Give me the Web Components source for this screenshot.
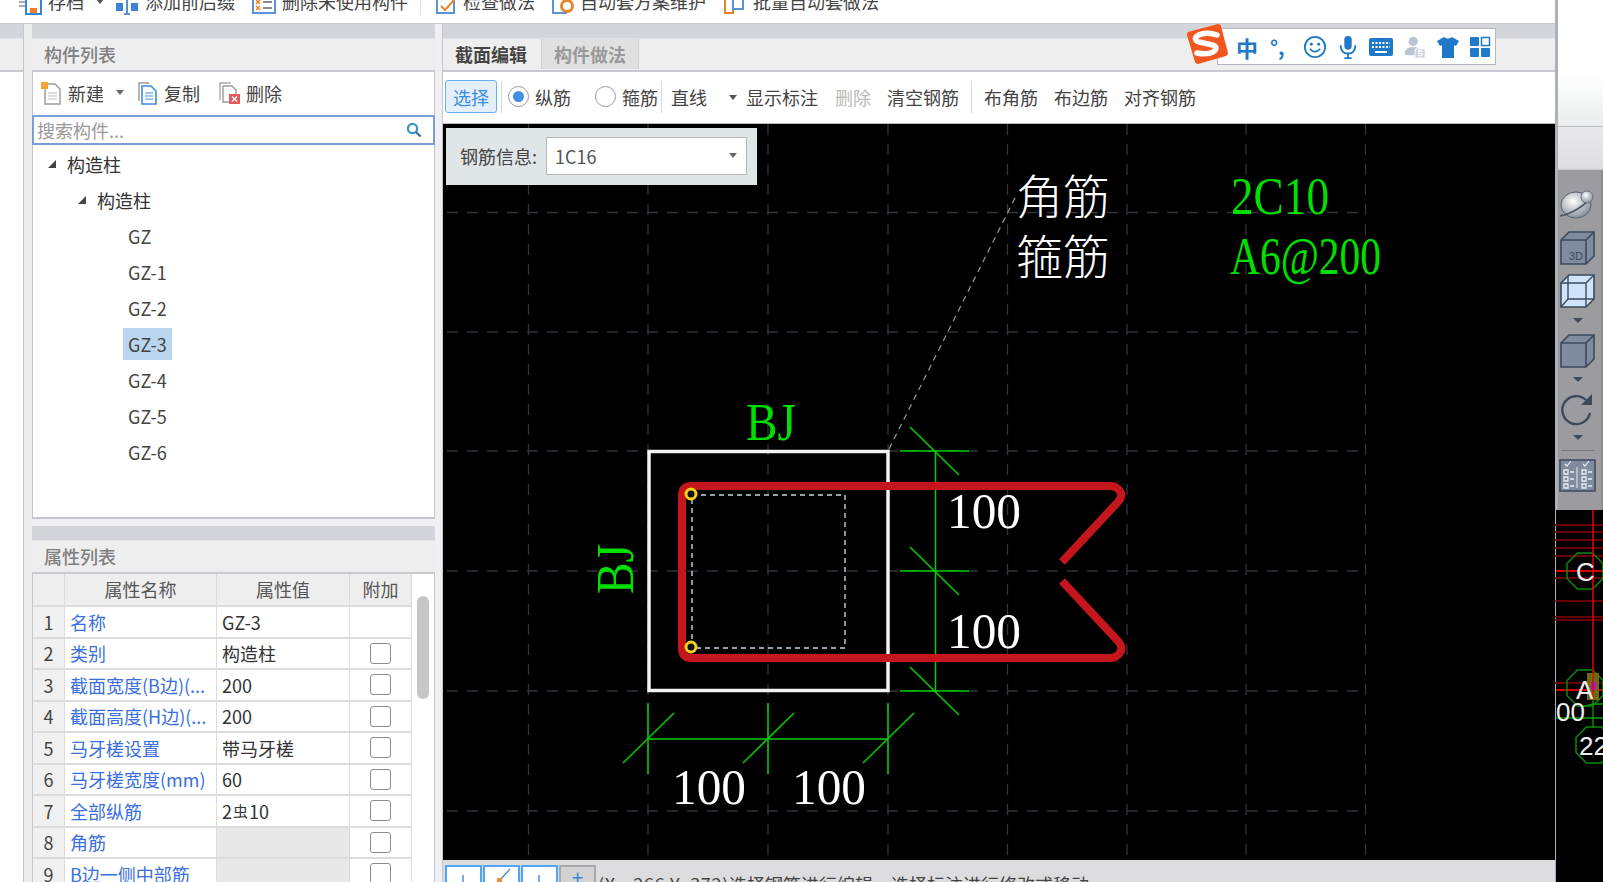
<!DOCTYPE html>
<html lang="zh">
<head>
<meta charset="utf-8">
<title>构造柱 截面编辑</title>
<style>
  html, body { margin: 0; height: 882px; overflow: hidden; background: #fff; }
  body { font: 18px "Noto Sans CJK SC", "Noto Sans", sans-serif; color: #333; }
</style>
</head>
<body>
<gcl-app></gcl-app>
<script>
const FONT = '"Noto Sans CJK SC", "Noto Sans", sans-serif';

class TopBar extends HTMLElement {
  constructor() { super(); this.attachShadow({ mode: 'open' }); }
  connectedCallback() { this.render(); }
  render() {
    this.shadowRoot.innerHTML = `
      <style>
        :host { display: block; height: 24px; background: #fff; border-bottom: 1px solid #c4c6cb; box-sizing: border-box; overflow: hidden; }
        .row { display: flex; align-items: center; height: 24px; margin-top: -11px; padding-left: 18px; white-space: nowrap; color: #444; }
        .item { display: flex; align-items: center; gap: 6px; }
        svg { width: 24px; height: 24px; flex: none; margin-top: 3px; }
        .arrow { width: 0; height: 0; border: 4px solid transparent; border-top: 5px solid #555; border-bottom: 0; margin-left: 6px; }
        .sep { width: 1px; height: 28px; background: #ddd; margin-left: 12px; }
      </style>
      <div class="row">
        <div class="item">
          <svg viewBox="0 0 24 24"><path d="M1 3h6M1 7h6M1 11h6M1 15h6" stroke="#aab" stroke-width="2" fill="none"/><rect x="8" y="8" width="15" height="15" fill="#fff" stroke="#3b83d6" stroke-width="2"/><rect x="12" y="17" width="7" height="5" fill="#ee7f2d"/></svg>
          <span>存档</span><i class="arrow"></i>
        </div>
        <div class="item" style="margin-left:11px">
          <svg viewBox="0 0 24 24"><rect x="1" y="12" width="7" height="8" fill="#3b83d6"/><rect x="16" y="12" width="7" height="8" fill="#3b83d6"/><path d="M12 8v15M9 23h6" stroke="#5b8fd0" stroke-width="2" fill="none"/></svg>
          <span>添加前后缀</span>
        </div>
        <div class="item" style="margin-left:17px">
          <svg viewBox="0 0 24 24"><rect x="1" y="4" width="22" height="18" fill="#fff" stroke="#5b93d6" stroke-width="2"/><path d="M4 9l4 4m0-4l-4 4M4 15l4 4m0-4l-4 4" stroke="#e8842c" stroke-width="1.5"/><path d="M11 11h9M11 17h9" stroke="#666" stroke-width="1.5"/></svg>
          <span>删除未使用构件</span>
        </div>
        <i class="sep"></i>
        <div class="item" style="margin-left:14px;gap:4px">
          <svg viewBox="0 0 24 24"><path d="M2 3h17v19H2z" fill="#fff" stroke="#5b93d6" stroke-width="2"/><path d="M6 15l4 4 9-10" stroke="#e8842c" stroke-width="2" fill="none"/></svg>
          <span>检查做法</span>
        </div>
        <div class="item" style="margin-left:16px;gap:5px">
          <svg viewBox="0 0 24 24"><path d="M2 3h13v19H2z" fill="#fff" stroke="#5b93d6" stroke-width="2"/><circle cx="16" cy="15" r="5.5" fill="#fff" stroke="#e8842c" stroke-width="3"/></svg>
          <span>自动套方案维护</span>
        </div>
        <div class="item" style="margin-left:17px">
          <svg viewBox="0 0 24 24"><path d="M2 3h8v19H2z" fill="#fff" stroke="#e8842c" stroke-width="2"/><path d="M10 3h10v15h-10z" fill="#fff" stroke="#5b93d6" stroke-width="2"/></svg>
          <span>批量自动套做法</span>
        </div>
      </div>`;
  }
}
customElements.define('top-bar', TopBar);

class PanelHead extends HTMLElement {
  constructor() { super(); this.attachShadow({ mode: 'open' }); }
  connectedCallback() { this.render(); }
  render() {
    this.shadowRoot.innerHTML = `
      <style>
        :host { display: block; flex: none; box-sizing: border-box; height: 48px; background: #d3d5da; padding-top: 14px; }
        .bar { box-sizing: border-box; height: 34px; background: #eee; border-bottom: 2px solid #c8cacf; border-top: 1px solid #e2e3e6; display: flex; align-items: center; padding: 0 0 1px 12px; color: #808080; font-weight: 500; }
      </style>
      <div class="bar"><slot></slot></div>`;
  }
}
customElements.define('panel-head', PanelHead);

class CompList extends HTMLElement {
  constructor() { super(); this.attachShadow({ mode: 'open' }); }
  connectedCallback() { this.render(); }
  render() {
    const kids = ['GZ', 'GZ-1', 'GZ-2', 'GZ-3', 'GZ-4', 'GZ-5', 'GZ-6']
      .map(n => `<div class="node leaf"><span class="${n === 'GZ-3' ? 'on' : ''}">${n}</span></div>`).join('');
    this.shadowRoot.innerHTML = `
      <style>
        :host { display: block; flex: none; height: 447px; box-sizing: border-box; background: #fff; border: solid #c4c6cb; border-width: 0 1px 2px; }
        .tools { height: 43px; display: flex; align-items: center; padding: 0 0 2px 7px; box-sizing: border-box; color: #444; }
        .tools div { display: flex; align-items: center; gap: 6px; height: 34px; }
        .tools svg { width: 22px; height: 24px; }
        .arrow { width: 0; height: 0; border: 4px solid transparent; border-top: 5px solid #666; border-bottom: 0; margin-left: 6px; }
        .search { box-sizing: border-box; height: 30px; margin: 0 -1px; border: 2px solid #7b9ed9; display: flex; align-items: center; justify-content: space-between; padding: 0 11px 0 3px; color: #9a9a9a; background: #fff; }
        .search svg { width: 16px; height: 16px; }
        .tree { padding-top: 1px; }
        .node { height: 36px; display: flex; align-items: center; color: #333; }
        .node i { width: 0; height: 0; border-style: solid; border-width: 0 0 8px 8px; border-color: transparent transparent #444 transparent; margin-right: 11px; }
        .l1 { padding-left: 15px; } .l2 { padding-left: 45px; } .leaf { padding-left: 95px; color: #444; }
        .leaf span { padding: 3px 5px; line-height: 26px; margin-left: -5px; }
        .leaf span.on { background: #b9d6ee; }
      </style>
      <div class="tools">
        <div>
          <svg viewBox="0 0 22 24"><path d="M5 3h10l5 5v15H5z" fill="#fff" stroke="#999" stroke-width="1.4"/><path d="M8 12h9M8 15h9M8 18h9" stroke="#bbb"/><rect x="1" y="1" width="7" height="7" fill="#f3a33a"/></svg>
          <span>新建</span><i class="arrow"></i>
        </div>
        <div style="margin-left:12px">
          <svg viewBox="0 0 22 24"><path d="M3 20V2h10" fill="none" stroke="#999" stroke-width="1.4"/><path d="M6 5h9l5 5v13H6z" fill="#fff" stroke="#3f8bdc" stroke-width="1.6"/><path d="M9 12h8M9 15h8M9 18h8" stroke="#3f8bdc"/></svg>
          <span>复制</span>
        </div>
        <div style="margin-left:18px">
          <svg viewBox="0 0 22 24"><path d="M2 19V2h11" fill="none" stroke="#aaa" stroke-width="1.4"/><path d="M5 5h9l4 4v6M5 5v16h6" fill="#fff" stroke="#999" stroke-width="1.4"/><rect x="11" y="13" width="11" height="10" fill="#e25a5a"/><path d="M14 15.5l5 5m0-5l-5 5" stroke="#fff" stroke-width="1.4"/></svg>
          <span>删除</span>
        </div>
      </div>
      <div class="search">
        <span>搜索构件...</span>
        <svg viewBox="0 0 16 16"><circle cx="6.5" cy="6.5" r="4.6" fill="none" stroke="#3a93c9" stroke-width="2.2"/><path d="M10 10l4.5 4.5" stroke="#3a6f9e" stroke-width="2.4"/></svg>
      </div>
      <div class="tree">
        <div class="node l1"><i></i>构造柱</div>
        <div class="node l2"><i></i>构造柱</div>
        ${kids}
      </div>`;
  }
}
customElements.define('comp-list', CompList);

class PropTable extends HTMLElement {
  constructor() { super(); this.attachShadow({ mode: 'open' }); }
  connectedCallback() { this.render(); }
  render() {
    const rows = [
      ['名称', 'GZ-3', 0, 0],
      ['类别', '构造柱', 1, 0],
      ['截面宽度(B边)(...', '200', 1, 0],
      ['截面高度(H边)(...', '200', 1, 0],
      ['马牙槎设置', '带马牙槎', 1, 0],
      ['马牙槎宽度(mm)', '60', 1, 0],
      ['全部纵筋', '2<sup>虫</sup>10', 1, 0],
      ['角筋', '', 1, 1],
      ['B边一侧中部筋', '', 1, 1]
    ].map((r, i) => `
      <div class="num">${i + 1}</div>
      <div class="name">${r[0]}</div>
      <div class="val ${r[3] ? 'off' : ''}">${r[1]}</div>
      <div class="add">${r[2] ? '<i></i>' : ''}</div>`).join('');
    this.shadowRoot.innerHTML = `
      <style>
        :host { display: flex; flex: none; background: #fff; border: solid #c4c6cb; border-width: 0 1px; height: 308px; overflow: hidden; }
        .grid { display: grid; grid-template-columns: 32px 152px 133px 62px; grid-template-rows: 33px; grid-auto-rows: 31.5px; width: 379px; align-content: start; flex: none; }
        .grid > div { box-sizing: border-box; border: solid #dcdcdc; border-width: 0 1px 2px 0; display: flex; align-items: center; white-space: nowrap; overflow: hidden; }
        .head { background: #eee; justify-content: center; color: #555; padding-bottom: 2px; }
        .num { background: #f0f0f0; justify-content: center; color: #444; }
        .name { color: #3a6fe0; padding-left: 5px; }
        .val { padding-left: 5px; color: #333; }
        .val.off { background: #e8e8e8; }
        .add { justify-content: center; }
        .add i { box-sizing: border-box; width: 21px; height: 21px; border: 1.5px solid #8c8c8c; border-radius: 3px; background: #fff; }
        sup { font-size: 15px; line-height: 0; vertical-align: 4px; margin: 0 1px; }
        .scroll { flex: 1; display: flex; justify-content: center; padding-top: 22px; }
        .scroll b { width: 12px; height: 103px; border-radius: 6px; background: #c6c6c6; }
      </style>
      <div class="grid">
        <div class="head"></div><div class="head">属性名称</div><div class="head">属性值</div><div class="head">附加</div>
        ${rows}
      </div>
      <div class="scroll"><b></b></div>`;
  }
}
customElements.define('prop-table', PropTable);

class EditBar extends HTMLElement {
  constructor() { super(); this.attachShadow({ mode: 'open' }); }
  connectedCallback() { this.render(); }
  render() {
    this.shadowRoot.innerHTML = `
      <style>
        :host { display: flex; flex: none; align-items: center; height: 52px; box-sizing: border-box; padding: 0 0 2px 2px; background: #fff; white-space: nowrap; color: #444; border-bottom: 1px solid #bbb; }
        .pick { box-sizing: border-box; width: 52px; height: 33px; border: 1.5px solid #69aef0; border-radius: 3px; background: #e3f0fc; color: #3d8ce0; display: flex; align-items: center; justify-content: center; }
        .sep { width: 1px; height: 32px; background: #d8d8d8; }
        .radio { box-sizing: border-box; width: 21px; height: 21px; border: 1.5px solid #999; border-radius: 50%; background: #fff; display: flex; align-items: center; justify-content: center; margin-right: 6px; }
        .radio.on::after { content: ""; width: 11px; height: 11px; border-radius: 50%; background: #3f8fe6; }
        .arrow { width: 0; height: 0; border: 4px solid transparent; border-top: 5px solid #555; border-bottom: 0; margin: 2px 0 0 8px; }
        .off { color: #bbb; }
      </style>
      <div class="pick">选择</div>
      <i class="sep" style="margin-left:4px"></i>
      <i class="radio on" style="margin-left:6px"></i><span>纵筋</span>
      <i class="radio" style="margin-left:24px"></i><span>箍筋</span>
      <i class="sep" style="margin-left:3px"></i>
      <span style="margin-left:9px">直线</span><i class="arrow" style="margin-left:22px"></i>
      <span style="margin-left:9px">显示标注</span>
      <span class="off" style="margin-left:17px">删除</span>
      <span style="margin-left:16px">清空钢筋</span>
      <i class="sep" style="margin-left:12px"></i>
      <span style="margin-left:12px">布角筋</span>
      <span style="margin-left:16px">布边筋</span>
      <span style="margin-left:16px">对齐钢筋</span>`;
  }
}
customElements.define('edit-bar', EditBar);

class SectionCanvas extends HTMLElement {
  constructor() { super(); this.attachShadow({ mode: 'open' }); }
  connectedCallback() { this.render(); }
  render() {
    const xs = [528.5, 648, 768, 888, 1007.5, 1127, 1246, 1365.5];
    const ys = [212.5, 332, 451, 571, 691, 811];
    const grid = xs.map(x => `<path d="M${x} 124V860"/>`).join('') +
      ys.map(y => `<path d="M447 ${y}H1366"/>`).join('');
    const slash = (x, y) => `<path d="M${x - 25} ${y + 24}L${x + 26} ${y - 26}"/>`;
    const back = (x, y) => `<path d="M${x - 25} ${y - 24}L${x + 24} ${y + 24}"/>`;
    this.shadowRoot.innerHTML = `
      <style>
        :host { display: block; flex: none; position: relative; height: 736px; background: #000; overflow: hidden; }
        svg { display: block; width: 1112px; height: 736px; }
        text { font-family: "Liberation Serif", "Noto Sans CJK SC", serif; }
        .info { position: absolute; left: 3px; top: 4px; width: 311px; height: 57px; box-sizing: border-box; background: #e0e6e8; display: flex; align-items: center; padding: 0 0 2px 14px; gap: 9px; color: #444; }
        .sel { box-sizing: border-box; width: 201px; height: 38px; background: #fff; border: 1.5px solid #b5b5b5; display: flex; align-items: center; justify-content: space-between; padding: 0 9px 0 8px; color: #555; }
        .sel i { width: 0; height: 0; border: 4px solid transparent; border-top: 5px solid #666; border-bottom: 0; }
      </style>
      <svg viewBox="443 124 1112 736">
        <g stroke="#30343d" stroke-width="1.3" stroke-dasharray="11 9" fill="none">${grid}</g>
        <path d="M889 449L1017 194" stroke="#999" stroke-width="1.2" stroke-dasharray="6 5" fill="none"/>
        <rect x="649" y="451.5" width="239" height="239" fill="none" stroke="#f2f2f2" stroke-width="3.5"/>
        <g stroke="#00d000" stroke-width="1.5" fill="none">
          <path d="M900 451H969M900 571H969M900 691H969M935.500 451V691"/>
          ${back(935, 451)}${back(935, 571)}${back(935, 691)}
          <path d="M648 739H888M648 703V774M768 703V774M888 703V774"/>
          ${slash(648, 739)}${slash(768, 739)}${slash(888, 739)}
        </g>
        <rect x="692" y="495" width="153" height="153" fill="none" stroke="#c6d6e6" stroke-width="1.4" stroke-dasharray="5 4"/>
        <path d="M1062 562L1117 503Q1125 495 1118 489Q1115 486 1110 486H692Q682 486 682 496V648Q682 658 692 658H1110Q1115 658 1118 655Q1125 648 1117 640L1062 581" fill="none" stroke="#c4161c" stroke-width="8"/>
        <circle cx="691" cy="494" r="5" fill="#111" stroke="#f7d21c" stroke-width="3"/>
        <circle cx="691" cy="647" r="5" fill="#111" stroke="#f7d21c" stroke-width="3"/>
        <g fill="#00e000" font-size="52">
          <text x="746" y="440" textLength="50" lengthAdjust="spacingAndGlyphs">BJ</text>
          <text transform="translate(633 594) rotate(-90)" textLength="50" lengthAdjust="spacingAndGlyphs">BJ</text>
          <text x="1231" y="214" textLength="98" lengthAdjust="spacingAndGlyphs">2C10</text>
          <text x="1230" y="274" textLength="151" lengthAdjust="spacingAndGlyphs">A6@200</text>
        </g>
        <g fill="#fff" font-size="50">
          <text x="947" y="528" textLength="74" lengthAdjust="spacingAndGlyphs">100</text>
          <text x="947" y="648" textLength="74" lengthAdjust="spacingAndGlyphs">100</text>
          <text x="672" y="804" textLength="74" lengthAdjust="spacingAndGlyphs">100</text>
          <text x="792" y="804" textLength="74" lengthAdjust="spacingAndGlyphs">100</text>
        </g>
        <g fill="#fff" font-size="47" font-weight="300">
          <text x="1016" y="214">角筋</text>
          <text x="1016" y="274">箍筋</text>
        </g>
      </svg>
      <div class="info"><span>钢筋信息:</span><div class="sel"><span>1C16</span><i></i></div></div>`;
  }
}
customElements.define('section-canvas', SectionCanvas);

class StatusRow extends HTMLElement {
  constructor() { super(); this.attachShadow({ mode: 'open' }); }
  connectedCallback() { this.render(); }
  render() {
    this.shadowRoot.innerHTML = `
      <style>
        :host { display: flex; flex: none; height: 22px; box-sizing: border-box; padding: 5px 0 0 2px; background: #dcdcde; overflow: hidden; white-space: nowrap; color: #444; }
        .b { box-sizing: border-box; width: 37px; height: 30px; background: #fff; border: 2px solid #4ea6f5; margin-right: 1px; flex: none; }
        .b svg { display: block; width: 33px; height: 26px; }
        .plus { background: #d2d2d4; border-color: #a8a8a8; color: #3a86d8; text-align: center; line-height: 20px; font-size: 20px; }
        .msg { line-height: 26px; margin: 6px 0 0 1px; }
        .msg b { font-weight: 400; letter-spacing: .7px; }
      </style>
      <div class="b"><svg viewBox="0 0 33 26"><path d="M16 8V26" stroke="#4a8fdc" stroke-width="1.500"/></svg></div>
      <div class="b"><svg viewBox="0 0 33 26"><path d="M15 13L25 2" stroke="#4a8fdc" stroke-width="1.500"/><rect x="12" y="11" width="5" height="5" fill="#ee8a3a"/></svg></div>
      <div class="b"><svg viewBox="0 0 33 26"><path d="M16 8V26" stroke="#4a8fdc" stroke-width="1.500"/></svg></div>
      <div class="b plus">+</div>
      <span class="msg"><b>(X: -266 Y: 372)</b>选择钢筋进行编辑，选择标注进行修改或移动.</span>`;
  }
}
customElements.define('status-row', StatusRow);

class ToolRail extends HTMLElement {
  constructor() { super(); this.attachShadow({ mode: 'open' }); }
  connectedCallback() { this.render(); }
  render() {
    const cube = (inner, fill) => `
      <path d="M2 10L10 2H35V26L27 34H2Z" fill="${fill}" stroke="#3e4a5c" stroke-width="1.6"/>
      <path d="M2 10H27V34M27 10L35 2" fill="none" stroke="#3e4a5c" stroke-width="1.6"/>${inner}`;
    this.shadowRoot.innerHTML = `
      <style>
        :host { display: flex; flex: none; flex-direction: column; align-items: center; height: 340px; box-sizing: border-box; padding: 18px 4px 0 0; background: #9b9ba0; border-left: 3px solid #adb1ba; border-right: 2px solid #8b8b90; }
        svg { display: block; flex: none; width: 37px; }
        .down { width: 0; height: 0; border: 5px solid transparent; border-top: 5px solid #3e4a5c; border-bottom: 0; flex: none; }
        .line { width: 34px; height: 1px; background: #77777c; margin-top: 10px; flex: none; }
      </style>
      <svg viewBox="0 0 37 31" height="31">
        <defs><radialGradient id="ball" cx=".4" cy=".35" r=".8"><stop offset="0" stop-color="#fff"/><stop offset="1" stop-color="#6f7a88"/></radialGradient></defs>
        <ellipse cx="17" cy="17" rx="15" ry="13" fill="url(#ball)" stroke="#5a6270"/>
        <path d="M1 28C12 26 26 18 33 8" fill="none" stroke="#4a5260" stroke-width="1.5"/>
        <circle cx="28" cy="9" r="6" fill="url(#ball)" stroke="#6a7280"/>
      </svg>
      <svg viewBox="0 0 37 36" height="36" style="margin-top:11px">${cube('<text x="10" y="30" font-family="Liberation Sans, sans-serif" font-size="11" fill="#3e4a5c">3D</text>', '#7f8b9e')}</svg>
      <svg viewBox="0 0 37 36" height="36" style="margin-top:7px">
        <path d="M2 10L10 2H35V26L27 34H2Z" fill="#cfe3fb" stroke="#3e4a5c" stroke-width="1.6"/>
        <path d="M2 10H27V34M27 10L35 2M9 3V26H35M9 26L2 34" fill="none" stroke="#3e4a5c" stroke-width="1.400"/>
      </svg>
      <i class="down" style="margin-top:9px"></i>
      <svg viewBox="0 0 37 36" height="36" style="margin-top:10px">${cube('', '#7f8b9e')}</svg>
      <i class="down" style="margin-top:8px"></i>
      <svg viewBox="0 0 37 35" height="35" style="margin-top:11px">
        <path d="M31 20A14 14 0 1 1 27 7" fill="none" stroke="#3e4a5c" stroke-width="2.400"/>
        <path d="M33 1V12H22Z" fill="#3e4a5c"/>
      </svg>
      <i class="down" style="margin-top:7px"></i>
      <i class="line"></i>
      <svg viewBox="0 0 37 35" height="35" style="margin-top:6px">
        <rect x="1" y="3" width="35" height="31" fill="#7f8b9e" stroke="#3e4a5c" stroke-width="1.500"/>
        <path d="M18 10V31" stroke="#e8eef6"/>
        <g stroke="#e8eef6" stroke-width="1.300" fill="none">
          <path d="M5 13h4v4H5zM5 20h4v4H5zM5 27h4v4H5zM23 13h4v4h-4zM23 20h4v4h-4zM23 27h4v4h-4zM11 15h4M11 22h4M11 29h4M29 15h4M29 22h4M29 29h4"/>
        </g>
        <path d="M6 7l2 2 4-5M24 7l2 2 4-5" stroke="#e8eef6" stroke-width="1.200" fill="none"/>
      </svg>`;
  }
}
customElements.define('tool-rail', ToolRail);

class MiniView extends HTMLElement {
  constructor() { super(); this.attachShadow({ mode: 'open' }); }
  connectedCallback() { this.render(); }
  render() {
    const dim = [525, 532, 540, 548, 556, 578, 601, 617, 620, 683]
      .map(y => `<path d="M1555 ${y}H1603"/>`).join('');
    const oct = (cx, cy) => {
      const r = 18, k = r * 0.42;
      return `<path d="M${cx - k} ${cy - r}H${cx + k}L${cx + r} ${cy - k}V${cy + k}L${cx + k} ${cy + r}H${cx - k}L${cx - r} ${cy + k}V${cy - k}Z"/>`;
    };
    this.shadowRoot.innerHTML = `
      <style>
        :host { display: block; flex: none; height: 372px; background: #000; overflow: hidden; }
        svg { display: block; width: 48px; height: 372px; }
        text { font-family: "Liberation Sans", sans-serif; fill: #eee; font-size: 26px; }
      </style>
      <svg viewBox="1555 510 48 372">
        <path d="M1555.500 510V882" stroke="#aab0c0"/>
        <g stroke="#8a0000" stroke-width="1.600">${dim}</g>
        <path d="M1556 571H1603M1556 690H1603" stroke="#d40000" stroke-width="2"/>
        <g stroke="#00a000" stroke-width="1.300" fill="none">
          <path d="M1593 683V727M1581 707L1593 704H1603M1556 718H1603"/>
        </g>
        <g stroke="#0a8a0a" stroke-width="1.500" fill="none">${oct(1585, 571)}${oct(1585, 688)}${oct(1594, 745)}</g>
        <path d="M1593 510V683" stroke="#e00000" stroke-width="1.600"/>
        <rect x="1587" y="673" width="12" height="27" fill="#6f6a12"/>
        <rect x="1591" y="682" width="5" height="8" fill="#b01ac0"/>
        <path d="M1593 673V700" stroke="#e00000" stroke-width="1.200"/>
        <text x="1576" y="581">C</text>
        <text x="1576" y="699">A</text>
        <text x="1556" y="721">00</text>
        <text x="1579" y="755">22</text>
      </svg>`;
  }
}
customElements.define('mini-view', MiniView);

class ImeBar extends HTMLElement {
  constructor() { super(); this.attachShadow({ mode: 'open' }); }
  connectedCallback() { this.render(); }
  render() {
    this.shadowRoot.innerHTML = `
      <style>
        :host { position: absolute; left: 1185px; top: 23px; width: 311px; height: 42px; display: block; }
        .bar { position: absolute; left: 32px; top: 5px; right: 0; bottom: 0; box-sizing: border-box; background: #fff; border: 1px solid #b4b6bc; display: flex; align-items: center; padding-left: 18px; color: #1f78c8; }
        .logo { position: absolute; left: 0; top: 0; width: 44px; height: 42px; }
        .bar svg { flex: none; height: 24px; }
        .zh { font-size: 22px; font-weight: 700; width: 22px; line-height: 24px; }
        .dot { font-size: 20px; font-weight: 700; width: 24px; margin-left: 12px; line-height: 24px; }
      </style>
      <div class="bar">
        <span class="zh">中</span>
        <span class="dot">°,</span>
        <svg viewBox="0 0 26 26" width="26" style="margin-left:8px"><circle cx="13" cy="13" r="11" fill="none" stroke="#1f78c8" stroke-width="2"/><circle cx="9" cy="10" r="1.600" fill="#1f78c8"/><circle cx="17" cy="10" r="1.600" fill="#1f78c8"/><path d="M7.500 15Q13 21 18.500 15" fill="none" stroke="#1f78c8" stroke-width="1.800"/></svg>
        <svg viewBox="0 0 20 26" width="20" style="margin-left:10px"><rect x="6" y="1" width="8" height="15" rx="4" fill="#1f78c8"/><path d="M2 11Q2 20 10 20Q18 20 18 11M10 20V25M6 25H14" fill="none" stroke="#1f78c8" stroke-width="2"/></svg>
        <svg viewBox="0 0 26 20" width="26" style="margin-left:10px;height:20px"><rect x="1" y="1" width="24" height="18" rx="2" fill="#1f78c8"/><path d="M4 6h18M4 10h18" stroke="#fff" stroke-width="2" stroke-dasharray="2 1.500"/><path d="M7 15h12" stroke="#fff" stroke-width="2"/></svg>
        <svg viewBox="0 0 24 26" width="24" style="margin-left:9px"><circle cx="10" cy="7" r="5" fill="#b9c4d2"/><path d="M1 20Q1 13 10 13Q16 13 18 16V22H3Q1 22 1 20Z" fill="#b9c4d2"/><rect x="12" y="15" width="11" height="10" rx="1" fill="#cdd6e0" stroke="#fff"/><path d="M20 17.500h-4v2.500h3.500v2.500H15" fill="none" stroke="#fff" stroke-width="1.200"/></svg>
        <svg viewBox="0 0 24 24" width="24" style="margin-left:9px"><path d="M8 2Q12 5 16 2L23 6L20 11L18 10V23H6V10L4 11L1 6Z" fill="#1f78c8"/></svg>
        <svg viewBox="0 0 22 22" width="22" style="margin-left:9px;height:22px"><rect x="1" y="1" width="9" height="9" rx="1" fill="#1f78c8"/><rect x="12.500" y="1.500" width="8" height="8" fill="#fff" stroke="#1f78c8" stroke-width="1.500"/><rect x="1" y="12" width="9" height="9" rx="1" fill="#1f78c8"/><rect x="12" y="12" width="9" height="9" rx="1" fill="#1f78c8"/></svg>
      </div>
      <svg class="logo" viewBox="0 0 44 42">
        <path d="M3 9L33 1Q35 1 36 3L43 30Q43 32 41 33L13 41Q11 41 10 39L2 12Q2 10 3 9Z" fill="#f0561d"/>
        <path d="M32 12Q20 8 12 13Q8 17 14 19L28 22Q34 25 28 29Q22 32 12 30" fill="none" stroke="#fff" stroke-width="5.500" stroke-linecap="round"/>
      </svg>`;
  }
}
customElements.define('ime-bar', ImeBar);

class GclApp extends HTMLElement {
  constructor() { super(); this.attachShadow({ mode: 'open' }); }
  connectedCallback() { this.render(); }
  render() {
    this.shadowRoot.innerHTML = `
      <style>
        :host { display: flex; position: relative; width: 1603px; height: 882px; overflow: hidden; font-family: ${FONT}; }
        .main { width: 1555px; flex: none; display: flex; flex-direction: column; }
        .work { display: flex; height: 858px; flex: none; background: #fff; }
        .stub { width: 24px; flex: none; background: #fff; border-right: 1px solid #c4c6cb; box-sizing: border-box; }
        .split { width: 8px; flex: none; background: #eceded; }
        .split.b { background: #f0f0f2; border-right: 1px solid #c4c6cb; box-sizing: border-box; }
        .left { width: 403px; flex: none; display: flex; flex-direction: column; background: #f0f0f2; }
        .gap { height: 7px; flex: none; }
        .edit { width: 1112px; flex: none; display: flex; flex-direction: column; }
        .tabs { display: flex; height: 100%; align-items: stretch; margin-left: -12px; }
        .tab { display: flex; align-items: center; font-weight: 700; padding: 0 12px; color: #444; }
        .tab.off { margin-left: 2px; background: #e0e0e0; color: #999; border: solid #d0d0d0; border-width: 0 1px; }
        .right { flex: 1; display: flex; flex-direction: column; }
        .blank { height: 127px; flex: none; background: linear-gradient(#fff, #fff 60%, #eaeded); border-left: 3px solid #adb1ba; border-bottom: 1px solid #b8b8bc; box-sizing: border-box; }
        .blank2 { height: 43px; flex: none; background: linear-gradient(#e9e9eb, #dedee0); border-left: 3px solid #adb1ba; border-bottom: 1px solid #c8c8cc; box-sizing: border-box; }
      </style>
      <div class="main">
        <top-bar></top-bar>
        <div class="work">
          <div class="stub"><panel-head></panel-head></div>
          <div class="split"></div>
          <div class="left">
            <panel-head>构件列表</panel-head>
            <comp-list></comp-list>
            <div class="gap"></div>
            <panel-head>属性列表</panel-head>
            <prop-table></prop-table>
          </div>
          <div class="split b"></div>
          <div class="edit">
            <panel-head><div class="tabs"><div class="tab">截面编辑</div><div class="tab off">构件做法</div></div></panel-head>
            <edit-bar></edit-bar>
            <section-canvas></section-canvas>
            <status-row></status-row>
          </div>
        </div>
      </div>
      <div class="right">
        <div class="blank"></div>
        <div class="blank2"></div>
        <tool-rail></tool-rail>
        <mini-view></mini-view>
      </div>
      <ime-bar></ime-bar>`;
  }
}
customElements.define('gcl-app', GclApp);
</script>
</body>
</html>
